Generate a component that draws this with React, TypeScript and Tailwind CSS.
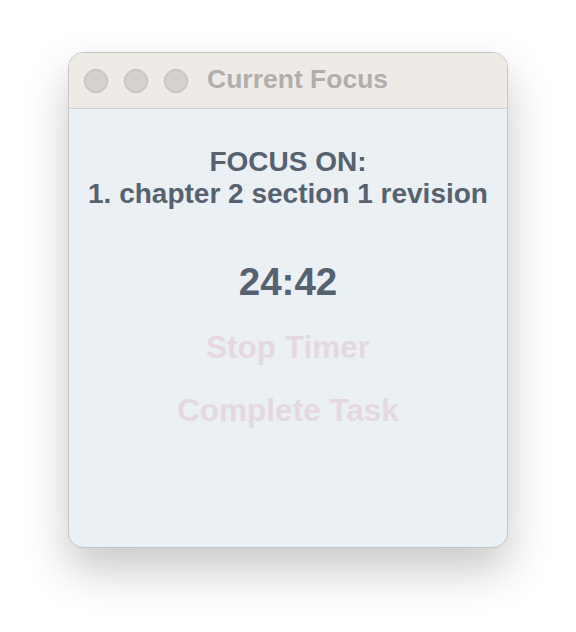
export default function App() {
  return (
    <div
      className="flex min-h-[632px] w-full justify-center bg-white pt-[52px]"
      style={{ fontFamily: '"Liberation Sans", Arial, sans-serif' }}
    >
      <div className="flex h-[496px] w-[440px] flex-col overflow-hidden rounded-[15px] border border-[#c4c4c4] bg-[#eaf0f4] shadow-[0_22px_45px_rgba(0,0,0,0.22)]">
        {/* Title bar */}
        <div className="flex h-[56px] shrink-0 items-center border-b border-[#cfd0d0] bg-[#eeebe7] pl-[15px]">
          <div className="flex gap-[16px]">
            <span className="h-[24px] w-[24px] rounded-full border border-[#bcb8b4] bg-[#d6d1cd]" />
            <span className="h-[24px] w-[24px] rounded-full border border-[#bcb8b4] bg-[#d6d1cd]" />
            <span className="h-[24px] w-[24px] rounded-full border border-[#bcb8b4] bg-[#d6d1cd]" />
          </div>
          <span className="mb-[2px] ml-[19px] text-[26.5px] font-bold leading-none text-[#b2aeab]">
            Current Focus
          </span>
        </div>

        {/* Body */}
        <div className="flex flex-col items-center pt-[37px] text-center">
          <div className="text-[28px] font-bold leading-[32px] text-[#56626f]">
            <div>FOCUS ON:</div>
            <div>1. chapter 2 section 1 revision</div>
          </div>
          <div className="mt-[49px] text-[38.5px] font-bold leading-[46px] text-[#56626f]">24:42</div>
          <button className="mt-[24px] text-[31.5px] font-bold leading-[37px] text-[#e6d8e1]">
            Stop Timer
          </button>
          <button className="mt-[26px] text-[31.5px] font-bold leading-[37px] text-[#e6d8e1]">
            Complete Task
          </button>
        </div>
      </div>
    </div>
  );
}
